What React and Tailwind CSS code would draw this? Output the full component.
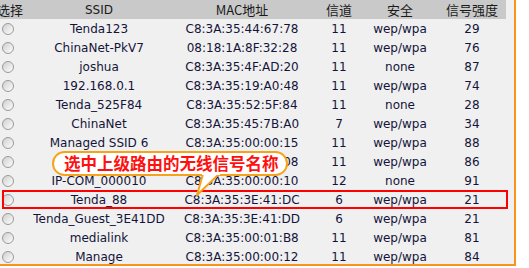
const rows = [
  ['Tenda123', 'C8:3A:35:44:67:78', '11', 'wep/wpa', '29'],
  ['ChinaNet-PkV7', '08:18:1A:8F:32:28', '11', 'wep/wpa', '76'],
  ['joshua', 'C8:3A:35:4F:AD:20', '11', 'none', '87'],
  ['192.168.0.1', 'C8:3A:35:19:A0:48', '11', 'wep/wpa', '74'],
  ['Tenda_525F84', 'C8:3A:35:52:5F:84', '11', 'none', '28'],
  ['ChinaNet', 'C8:3A:35:45:7B:A0', '7', 'wep/wpa', '34'],
  ['Managed SSID 6', 'C8:3A:35:00:00:15', '11', 'wep/wpa', '88'],
  ['Tenda_000008', 'C8:3A:35:00:00:08', '11', 'wep/wpa', '86'],
  ['IP-COM_000010', 'C8:3A:35:00:00:10', '12', 'none', '91'],
  ['Tenda_88', 'C8:3A:35:3E:41:DC', '6', 'wep/wpa', '21'],
  ['Tenda_Guest_3E41DD', 'C8:3A:35:3E:41:DD', '6', 'wep/wpa', '21'],
  ['medialink', 'C8:3A:35:00:01:B8', '11', 'wep/wpa', '81'],
  ['Manage', 'C8:3A:35:00:00:12', '11', 'wep/wpa', '84'],
];

const cols = 'grid grid-cols-[22px_154px_132px_62px_60px_76px]';

function Radio() {
  return (
    <span className="block w-[12px] h-[12px] rounded-full border border-[#9a9a9a] bg-gradient-to-br from-[#d0d0d0] to-[#fdfdfd] ml-[2px]" />
  );
}

export default function App() {
  return (
    <div className="w-[529px] h-[268px] bg-white overflow-hidden relative" style={{ fontFamily: '"DejaVu Sans", Verdana, sans-serif' }}>
      <div className="w-[516px] h-[266px] bg-[#f0f0f0] border-r-2 border-b-2 border-[#f7941d] overflow-hidden">
        {/* header */}
        <div
          className={`${cols} w-[506px] h-[19px] items-center bg-[#c9c9c9] text-[#1a1a1a] text-[13px] text-center`}
          style={{ fontFamily: '"Noto Sans CJK SC", sans-serif' }}
        >
          <div className="-ml-[3px] whitespace-nowrap">选择</div>
          <div style={{ fontFamily: '"DejaVu Sans", Verdana, sans-serif', fontSize: '12px' }}>SSID</div>
          <div>MAC地址</div>
          <div>信道</div>
          <div>安全</div>
          <div className="pl-[8px]">信号强度</div>
        </div>

        {rows.map((r, i) => (
          <div key={i} className={`${cols} w-[506px] h-[19px] items-center text-[12px] text-[#14143a] text-center relative`}>
            <div className="flex items-center justify-start">
              <Radio />
            </div>
            <div className="whitespace-nowrap">{r[0]}</div>
            <div className="whitespace-nowrap">{r[1]}</div>
            <div>{r[2]}</div>
            <div>{r[3]}</div>
            <div className="pl-[8px]">{r[4]}</div>
            {r[0] === 'Tenda_88' && (
              <span className="absolute left-[2px] top-0 w-[506px] h-[19px] border-2 border-[#ff0000]" />
            )}
          </div>
        ))}
      </div>

      {/* callout */}
      <div className="absolute left-[52px] top-[151px] w-[236px] h-[25px] rounded-[13px] border-2 border-[#f7a21b] bg-white flex items-center pl-[10px]">
        <span
          className="text-[16.5px] font-bold text-[#ff1010] whitespace-nowrap leading-none"
          style={{ fontFamily: '"Noto Sans CJK SC", sans-serif' }}
        >
          选中上级路由的无线信号名称
        </span>
      </div>
      <svg className="absolute left-[190px] top-[172px]" width="34" height="26" viewBox="0 0 34 26">
        <path d="M13 2 L7 23 L29 2" fill="white" stroke="#f7a21b" strokeWidth="2" strokeLinejoin="round" />
        <rect x="12" y="0" width="18" height="3" fill="white" />
      </svg>
    </div>
  );
}
